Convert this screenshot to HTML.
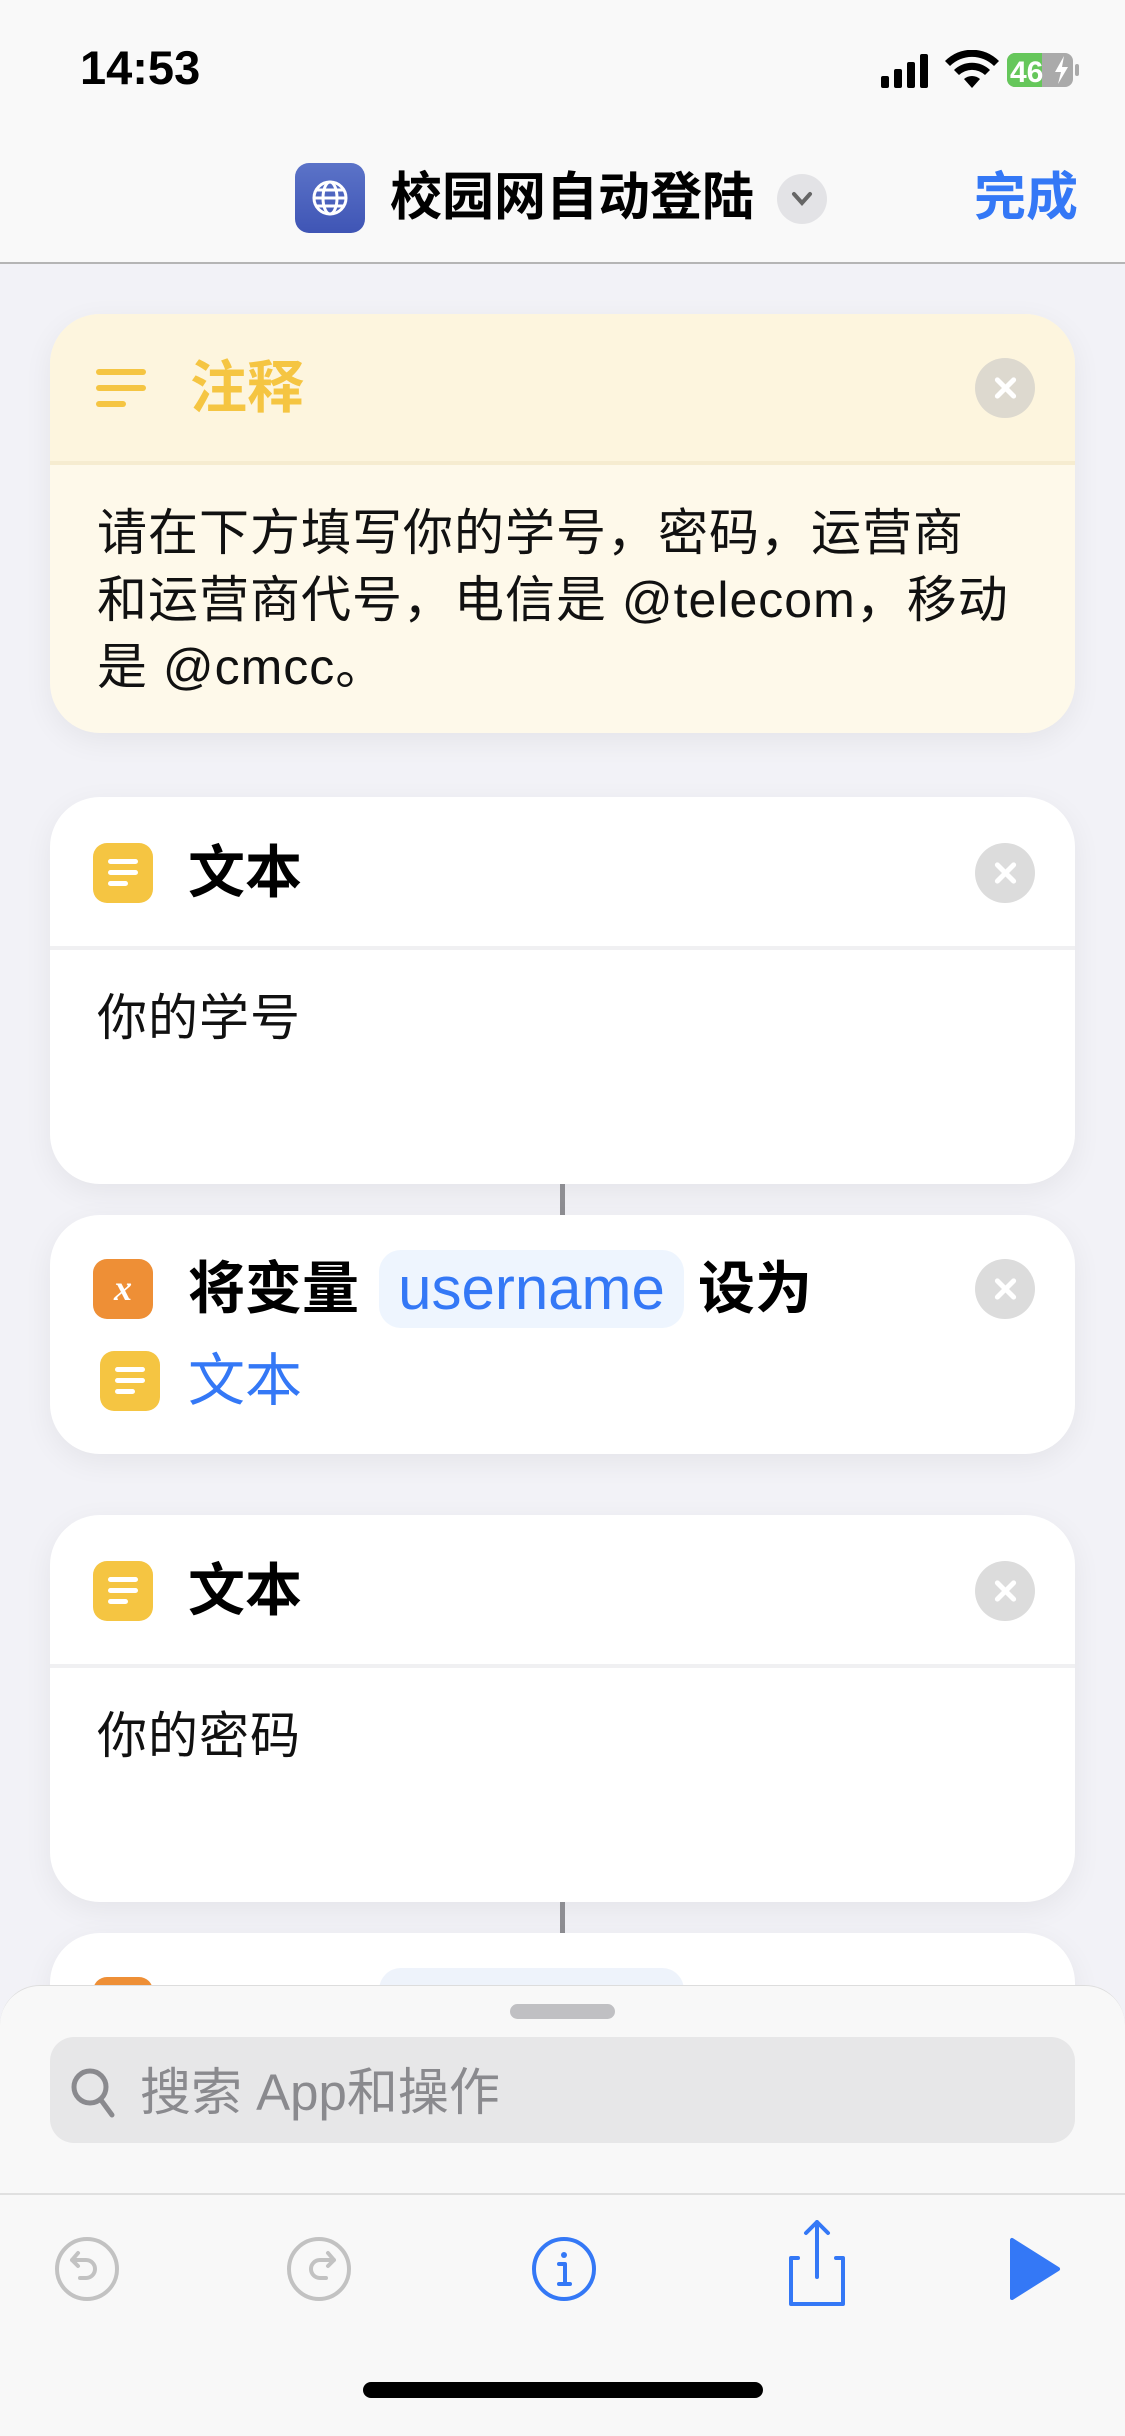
<!DOCTYPE html>
<html><head><meta charset="utf-8"><style>
*{margin:0;padding:0;box-sizing:border-box}
body{width:1125px;height:2436px;background:#f2f2f7;position:relative;overflow:hidden;font-family:"Liberation Sans","Noto Sans CJK SC",sans-serif}
.a{position:absolute}
.card{position:absolute;left:50px;width:1025px;background:#fff;border-radius:50px;box-shadow:0 8px 30px rgba(0,0,0,0.06);overflow:hidden}
.ttl{position:absolute;font-size:57px;font-weight:bold;color:#000;line-height:60px}
.body{position:absolute;left:47px;font-size:50px;letter-spacing:1px;color:#111;line-height:67px;white-space:nowrap}
.close{position:absolute;right:40px;width:60px;height:60px;border-radius:50%;background:#dcdcdc}
.close:before,.close:after{content:"";position:absolute;left:28px;top:16px;width:5px;height:28px;background:#fff;border-radius:3px;transform:rotate(45deg)}
.close:after{transform:rotate(-45deg)}
.ticon{position:absolute;width:60px;height:60px;border-radius:14px;background:#f5c542}
.ticon i{position:absolute;left:15px;height:5px;background:#fff;border-radius:3px}
.div{position:absolute;left:0;right:0;height:4px;background:#f0f0f2}
.pill{position:absolute;background:#eef5fe;border-radius:22px;color:#3478f6;font-size:60px;line-height:78px}
</style></head><body>
<!-- nav -->
<div class="a" style="left:0;top:0;width:1125px;height:264px;background:#f9f9f9;border-bottom:2px solid #b5b5b5"></div>
<!-- status bar -->
<div class="a" style="left:80px;top:40px;font-size:47px;font-weight:bold;color:#000;line-height:56px">14:53</div>
<svg class="a" style="left:880px;top:50px" width="210" height="40" viewBox="0 0 210 40">
<rect x="1" y="26" width="8" height="12" rx="2"/><rect x="14" y="19" width="8" height="19" rx="2"/><rect x="27" y="12" width="8" height="26" rx="2"/><rect x="40" y="4" width="8" height="34" rx="2"/>
<path d="M92 38 l-8-9 a12 12 0 0 1 16 0z"/><path d="M74 20 a26 26 0 0 1 36 0 l-5 5 a19 19 0 0 0-26 0z"/><path d="M65 11 a38 38 0 0 1 54 0 l-5 5 a31 31 0 0 0-44 0z"/>
<rect x="127" y="3" width="66" height="34" rx="8" fill="#aaa"/><path d="M135 3h27v34h-27a8 8 0 0 1-8-8v-18a8 8 0 0 1 8-8z" fill="#66c75b"/><rect x="195" y="14" width="4" height="12" rx="2" fill="#aaa"/>
<text x="130" y="32" font-size="30" font-weight="bold" fill="#fff" font-family="Liberation Sans">46</text>
<path d="M184 6 l-9 16 h6 l-3 12 10-17h-6z" fill="#fff"/>
</svg>
<div class="a" style="left:295px;top:163px;width:70px;height:70px;border-radius:14px;background:linear-gradient(#5b73c8,#3f55b5)"></div>
<svg class="a" style="left:310px;top:178px" width="40" height="40" viewBox="0 0 40 40" fill="none" stroke="#fff" stroke-width="3"><circle cx="20" cy="20" r="16"/><ellipse cx="20" cy="20" rx="7" ry="16"/><path d="M4 20h32M7 12h26M7 28h26"/></svg>
<div class="a" style="left:390px;top:168px;font-size:52px;font-weight:bold;line-height:60px">校园网自动登陆</div>
<div class="a" style="left:777px;top:174px;width:50px;height:50px;border-radius:50%;background:#e3e3e6"></div>
<svg class="a" style="left:789px;top:189px" width="26" height="20" viewBox="0 0 26 20" fill="none" stroke="#666" stroke-width="4" stroke-linecap="round"><path d="M5 5l8 9 8-9"/></svg>
<div class="a" style="left:974px;top:168px;font-size:52px;font-weight:bold;color:#3478f6;line-height:60px">完成</div>
<!-- note card -->
<div class="card" style="top:314px;height:419px;background:#fef9ea">
<div class="a" style="left:0;right:0;top:0;height:149px;background:#fdf5de"></div>
<div class="a" style="left:46px;top:55px;width:50px;height:6px;background:#f5c542;border-radius:3px"></div>
<div class="a" style="left:46px;top:71px;width:50px;height:6px;background:#f5c542;border-radius:3px"></div>
<div class="a" style="left:46px;top:87px;width:30px;height:6px;background:#f5c542;border-radius:3px"></div>
<div class="ttl" style="left:140px;top:44px;color:#f5c542">注释</div>
<div class="close" style="top:44px;background:#ddd9cf"></div>
<div class="div" style="top:147px;background:#f6ecd0"></div>
<div class="body" style="top:186px">请在下方填写你的学号，密码，运营商<br>和运营商代号，电信是 @telecom，移动<br>是 @cmcc。</div>
</div>
<!-- text card 1 -->
<div class="card" style="top:797px;height:387px">
<div class="ticon" style="left:43px;top:46px"><i style="top:16px;width:30px"></i><i style="top:27px;width:30px"></i><i style="top:38px;width:20px"></i></div>
<div class="ttl" style="left:138px;top:46px">文本</div>
<div class="close" style="top:46px"></div>
<div class="div" style="top:149px"></div>
<div class="body" style="top:188px">你的学号</div>
</div>
<div class="a" style="left:560px;top:1184px;width:5px;height:31px;background:#8e8e93"></div>
<!-- set var card -->
<div class="card" style="top:1215px;height:239px">
<div class="a" style="left:43px;top:44px;width:60px;height:60px;border-radius:14px;background:#ee8f36;color:#fff;font:italic bold 36px 'Liberation Serif',serif;text-align:center;line-height:58px">x</div>
<div class="ttl" style="left:138px;top:44px">将变量</div>
<div class="pill" style="left:329px;top:35px;width:305px;text-align:center">username</div>
<div class="ttl" style="left:648px;top:44px">设为</div>
<div class="close" style="top:44px"></div>
<div class="pill" style="left:40px;top:127px;width:233px"></div>
<div class="ticon" style="left:50px;top:136px"><i style="top:16px;width:30px"></i><i style="top:27px;width:30px"></i><i style="top:38px;width:20px"></i></div>
<div class="a" style="left:138px;top:136px;font-size:57px;color:#3478f6;line-height:60px">文本</div>
</div>
<!-- text card 2 -->
<div class="card" style="top:1515px;height:387px">
<div class="ticon" style="left:43px;top:46px"><i style="top:16px;width:30px"></i><i style="top:27px;width:30px"></i><i style="top:38px;width:20px"></i></div>
<div class="ttl" style="left:138px;top:46px">文本</div>
<div class="close" style="top:46px"></div>
<div class="div" style="top:149px"></div>
<div class="body" style="top:188px">你的密码</div>
</div>
<div class="a" style="left:560px;top:1902px;width:5px;height:31px;background:#8e8e93"></div>
<div class="card" style="top:1933px;height:200px">
<div class="a" style="left:43px;top:44px;width:60px;height:60px;border-radius:14px;background:#ee8f36"></div>
<div class="a" style="left:329px;top:35px;width:305px;height:78px;border-radius:22px;background:#eef3fb"></div>
</div>
<!-- bottom sheet -->
<div class="a" style="left:0;top:1985px;width:1125px;height:451px;background:#f8f8f8;border-radius:40px 40px 0 0;border-top:1px solid #ddd"></div>
<div class="a" style="left:510px;top:2004px;width:105px;height:15px;border-radius:8px;background:#c0c0c3"></div>
<div class="a" style="left:50px;top:2037px;width:1025px;height:106px;border-radius:24px;background:#e7e7e8"></div>
<svg class="a" style="left:70px;top:2065px" width="50" height="54" viewBox="0 0 50 54" fill="none" stroke="#8a8a8e" stroke-width="5" stroke-linecap="round"><circle cx="20" cy="22" r="16"/><path d="M31 35l11 15"/></svg>
<div class="a" style="left:140px;top:2064px;font-size:51px;color:#8a8a8e;line-height:58px">搜索 App和操作</div>
<div class="a" style="left:0;top:2193px;width:1125px;height:2px;background:#e0e0e0"></div>
<svg class="a" style="left:0;top:2220px" width="1125" height="100" viewBox="0 0 1125 100" fill="none" stroke-width="4" stroke-linecap="round" stroke-linejoin="round">
<circle cx="87" cy="49" r="30" stroke="#c2c2c2"/><path d="M78 33l-6 7 6 6M72 40h14a9 9 0 0 1 0 18h-6" stroke="#c2c2c2"/>
<circle cx="319" cy="49" r="30" stroke="#c2c2c2"/><path d="M328 33l6 7-6 6M334 40h-14a9 9 0 0 0 0 18h6" stroke="#c2c2c2"/>
<circle cx="564" cy="49" r="30" stroke="#3478f6"/><circle cx="564" cy="35" r="3" fill="#3478f6" stroke="none"/><path d="M559 44h6v20M559 64h11" stroke="#3478f6"/>
<path d="M798 38h-7v46h52v-46h-7M817 2v55M806 13l11-11 11 11" stroke="#3478f6"/>
<path d="M1012 20v58l46-29z" fill="#3478f6" stroke="#3478f6"/>
</svg>
<div class="a" style="left:363px;top:2382px;width:400px;height:16px;border-radius:8px;background:#000"></div>
</body></html>
